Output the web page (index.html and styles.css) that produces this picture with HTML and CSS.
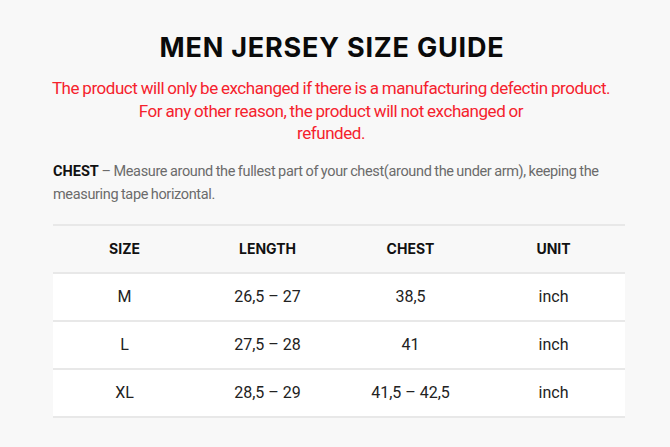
FILE: index.html
```html
<!DOCTYPE html>
<html>
<head>
<meta charset="utf-8">
<link rel="stylesheet" href="styles.css">
</head>
<body>
<div class="page">
  <h1 class="title">MEN JERSEY SIZE GUIDE</h1>
  <p class="notice">The product will only be exchanged if there is a manufacturing defectin product.<br>For any other reason, the product will not exchanged or<br>refunded.</p>
  <p class="desc"><strong class="label">CHEST</strong> <span>– Measure around the fullest part of your chest(around the under arm), keeping the measuring tape horizontal.</span></p>
  <table class="sizes">
    <thead>
      <tr><th>SIZE</th><th>LENGTH</th><th>CHEST</th><th>UNIT</th></tr>
    </thead>
    <tbody>
      <tr><td>M</td><td>26,5 – 27</td><td>38,5</td><td>inch</td></tr>
      <tr><td>L</td><td>27,5 – 28</td><td>41</td><td>inch</td></tr>
      <tr><td>XL</td><td>28,5 – 29</td><td>41,5 – 42,5</td><td>inch</td></tr>
    </tbody>
  </table>
</div>
</body>
</html>
```
FILE: styles.css
```css
html, body {
  margin: 0;
  padding: 0;
  background: #f8f8f8;
}
.page {
  width: 572px;
  margin-left: 53px;
  padding-top: 30px;
  font-family: Roboto, "Liberation Sans", sans-serif;
}
.title {
  margin: 0;
  text-align: center;
  font-family: Inter, sans-serif;
  font-weight: 700;
  font-size: 27px;
  letter-spacing: 0.8px;
  line-height: 36px;
  color: #0a0a0a;
  padding-right: 14px;
}
.notice {
  margin: 11px -20px 0 -20px;
  padding-right: 16px;
  text-align: center;
  white-space: nowrap;
  color: #f5222d;
  font-size: 17px;
  letter-spacing: -0.45px;
  word-spacing: -0.5px;
  line-height: 22.5px;
}
.desc {
  margin: 15px -10px 0 0;
  color: #6b6b6b;
  font-size: 14.5px;
  letter-spacing: -0.35px;
  word-spacing: -0.5px;
  line-height: 23px;
}
.desc .label {
  color: #111;
  font-weight: 700;
  letter-spacing: 0;
}
.sizes {
  margin-top: 18px;
  width: 100%;
  border-collapse: collapse;
  table-layout: fixed;
}
.sizes th, .sizes td {
  text-align: center;
  height: 46px;
  padding: 0;
  border-top: 2px solid #e8e8e8;
  border-bottom: 2px solid #e8e8e8;
}
.sizes th {
  font-family: Inter, sans-serif;
  font-weight: 700;
  font-size: 14px;
  color: #111;
}
.sizes td {
  background: #fff;
  font-size: 16px;
  color: #222;
}
```
